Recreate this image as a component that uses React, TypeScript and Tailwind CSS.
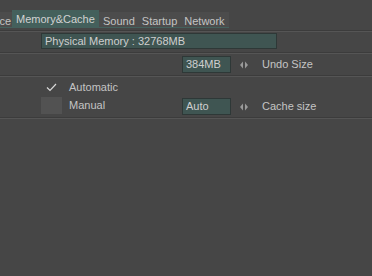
import React from "react";

function Arrows() {
  return (
    <svg width="8" height="8" viewBox="0 0 8 8" className="block">
      <polygon points="3,0.5 3,7.5 0,4" fill="#9a9a9a" />
      <polygon points="5,0.5 5,7.5 8,4" fill="#9a9a9a" />
    </svg>
  );
}

function Sep() {
  return (
    <div className="w-full">
      <div className="h-px bg-[#3c3c3c]" />
      <div className="h-px bg-[#555555]" />
    </div>
  );
}

function ValueField({ value, label }: { value: string; label: string }) {
  return (
    <div className="flex items-center">
      <div className="w-[49px] h-[17px] bg-[#3f5552] border border-[#2e3837] flex items-center pl-[3px] leading-none text-[#cfcfcf]">
        {value}
      </div>
      <div className="ml-[9px] flex items-center">
        <Arrows />
      </div>
      <div className="ml-[14px] leading-none">{label}</div>
    </div>
  );
}

export default function App() {
  return (
    <div
      className="w-[372px] h-[276px] bg-[#464646] text-[11px] text-[#c4c4c4] overflow-hidden"
      style={{ fontFamily: '"Liberation Sans", Arial, sans-serif' }}
    >
      <div className="pt-[10px] flex items-end h-[28px]">
        <div className="h-[16px] bg-[#4c4c4c] w-[12px] overflow-hidden flex items-end justify-end leading-none border-b border-[#44615d]">
          <span className="pr-[1px]">ce</span>
        </div>
        <div className="h-[18px] w-[87px] bg-[#44605c] text-[#d2d2d2] flex items-center pl-[4px] leading-none">
          Memory&amp;Cache
        </div>
        <div className="h-[16px] w-[130px] bg-[#4c4c4c] border-b border-[#44615d] flex items-end leading-none pl-[4px] gap-[7px]">
          <span>Sound</span>
          <span>Startup</span>
          <span>Network</span>
        </div>
      </div>
      <div className="mt-[2px]">
        <Sep />
      </div>
      <div className="h-[20px] flex items-start pt-[1px] pl-[41px]">
        <div className="w-[236px] h-[16px] bg-[#3f5552] border border-[#2e3837] flex items-center pl-[3px] leading-none text-[#cfcfcf]">
          Physical Memory : 32768MB
        </div>
      </div>
      <Sep />
      <div className="h-[21px] flex items-start pt-[2px] pl-[182px]">
        <ValueField value="384MB" label="Undo Size" />
      </div>
      <Sep />
      <div className="h-[19px] flex items-center pl-[41px] pt-[1px]">
        <div className="w-[21px] flex justify-center">
          <svg width="11" height="9" viewBox="0 0 11 9">
            <polyline points="1,4.5 4,7.5 10,1" fill="none" stroke="#d8d8d8" strokeWidth="1.2" />
          </svg>
        </div>
        <span className="ml-[7px] leading-none">Automatic</span>
      </div>
      <div className="h-[21px] flex items-start pt-[1px] pl-[41px]">
        <div className="w-[141px] flex items-center">
          <div className="w-[21px] h-[17px] bg-[#525252]" />
          <div className="ml-[7px] leading-none">Manual</div>
        </div>
        <div className="pt-[1px]">
          <ValueField value="Auto" label="Cache size" />
        </div>
      </div>
      <Sep />
    </div>
  );
}
